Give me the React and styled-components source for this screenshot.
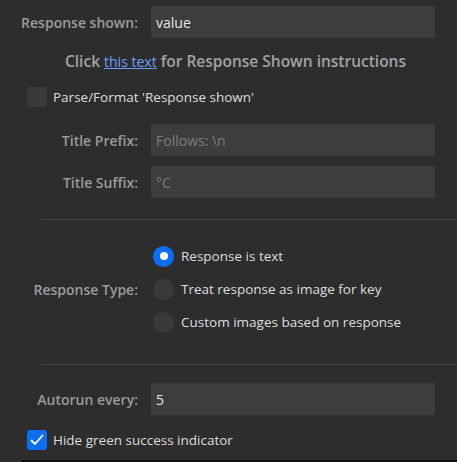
import React, { useState } from "react";
import styled, { createGlobalStyle } from "styled-components";

const GlobalStyle = createGlobalStyle`
  html, body {
    margin: 0;
    padding: 0;
    background: #2d2d2d;
  }
  body {
    font-family: "Open Sans", "Noto Sans", sans-serif;
  }
`;

const Panel = styled.div`
  width: 457px;
  height: 462px;
  background: #2d2d2d;
  overflow: hidden;
  display: flex;
  flex-direction: column;
`;

const FieldRow = styled.div`
  display: grid;
  grid-template-columns: 138px 284px;
  column-gap: 13px;
  align-items: center;
  margin-top: ${(p) => p.top || 0}px;
`;

const Label = styled.label`
  text-align: right;
  color: #9b9b9b;
  font-size: 14px;
  font-weight: 600;
`;

const TextInput = styled.input`
  height: 32px;
  box-sizing: border-box;
  border: none;
  outline: none;
  background: #3d3d3d;
  color: #e6e6e6;
  font-family: inherit;
  font-size: 14px;
  padding: 0 5px;
  &::placeholder {
    color: #7c7c7c;
  }
`;

const Hint = styled.div`
  text-align: center;
  color: #a3a3a3;
  font-size: 15.5px;
  font-weight: 600;
  margin-top: 12px;
  padding-left: 14px;
`;

const HintLink = styled.a`
  color: #6d9eff;
  font-weight: 400;
  font-size: 14px;
  text-decoration: underline;
  cursor: pointer;
`;

const CheckRow = styled.label`
  display: flex;
  align-items: center;
  gap: 6px;
  margin-left: 27px;
  margin-top: ${(p) => p.top || 0}px;
  color: #dedede;
  font-size: 13.5px;
`;

const Box = styled.span`
  width: 20px;
  height: 20px;
  border-radius: 3px;
  box-sizing: border-box;
  background: ${(p) => (p.checked ? "#0b6ff5" : "#3a3a3a")};
  display: flex;
  align-items: center;
  justify-content: center;
`;

const Divider = styled.hr`
  border: none;
  height: 1px;
  background: #454545;
  margin: ${(p) => p.top || 0}px 0 0 42px;
`;

const RadioBlock = styled.div`
  display: grid;
  grid-template-columns: 138px auto;
  column-gap: 15px;
  align-items: center;
  margin-top: ${(p) => p.top || 0}px;
`;

const RadioList = styled.div`
  display: flex;
  flex-direction: column;
  gap: 13px;
`;

const RadioOption = styled.label`
  display: flex;
  align-items: center;
  gap: 7px;
  color: #dedede;
  font-size: 13.5px;
  height: 20px;
`;

const Dot = styled.span`
  width: 21px;
  height: 21px;
  border-radius: 50%;
  background: ${(p) => (p.on ? "#0b6ff5" : "#3a3a3a")};
  display: flex;
  align-items: center;
  justify-content: center;
  &::after {
    content: "";
    width: 8px;
    height: 8px;
    border-radius: 50%;
    background: #fff;
    display: ${(p) => (p.on ? "block" : "none")};
  }
`;

const BottomEdge = styled.div`
  margin: auto 0 0 22px;
  height: 2px;
  background: #111;
`;

const options = [
  "Response is text",
  "Treat response as image for key",
  "Custom images based on response",
];

export default function App() {
  const [choice, setChoice] = useState(0);

  return (
    <Panel>
      <GlobalStyle />
      <FieldRow top={6}>
        <Label>Response shown:</Label>
        <TextInput defaultValue="value" />
      </FieldRow>
      <Hint>
        Click <HintLink>this text</HintLink> for Response Shown instructions
      </Hint>
      <CheckRow top={15}>
        <Box />
        Parse/Format 'Response shown'
      </CheckRow>
      <FieldRow top={17}>
        <Label>Title Prefix:</Label>
        <TextInput placeholder="Follows: \n" />
      </FieldRow>
      <FieldRow top={10}>
        <Label>Title Suffix:</Label>
        <TextInput placeholder="°C" />
      </FieldRow>
      <Divider top={21} />
      <RadioBlock top={26}>
        <Label>Response Type:</Label>
        <RadioList>
          {options.map((o, i) => (
            <RadioOption key={o} onClick={() => setChoice(i)}>
              <Dot on={choice === i} />
              {o}
            </RadioOption>
          ))}
        </RadioList>
      </RadioBlock>
      <Divider top={32} />
      <FieldRow top={18}>
        <Label>Autorun every:</Label>
        <TextInput defaultValue="5" />
      </FieldRow>
      <CheckRow top={15}>
        <Box checked>
          <svg width="14" height="12" viewBox="0 0 14 12">
            <path d="M1.5 6.5 L5 10 L12.5 1.5" fill="none" stroke="#fff" strokeWidth="1.8" strokeLinecap="round" strokeLinejoin="round" />
          </svg>
        </Box>
        Hide green success indicator
      </CheckRow>
      <BottomEdge />
    </Panel>
  );
}
